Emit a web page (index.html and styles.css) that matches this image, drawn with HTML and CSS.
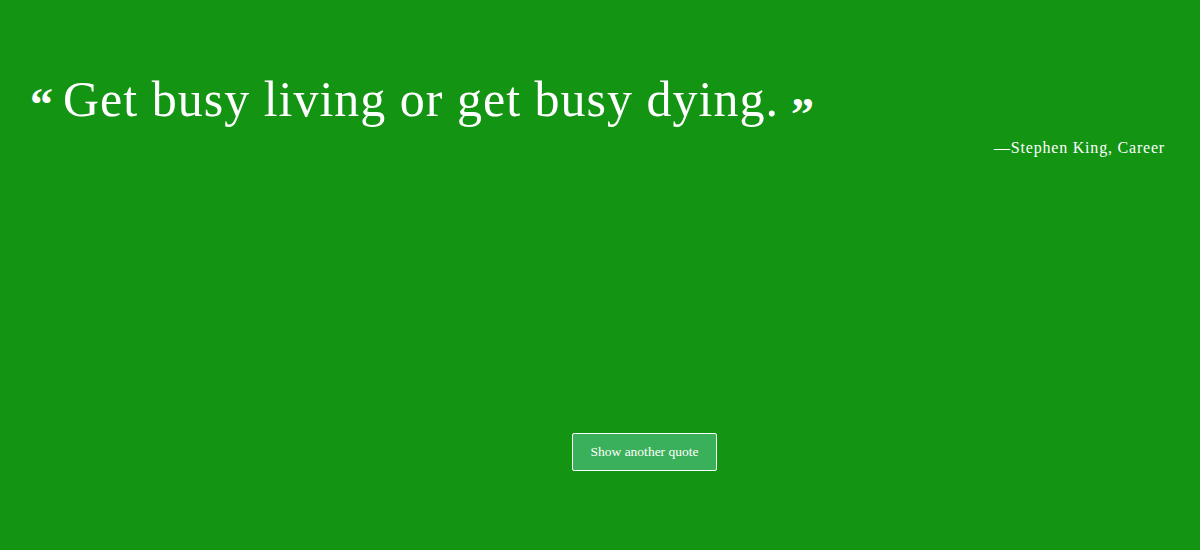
FILE: index.html
```html
<!DOCTYPE html>
<html>
<head>
<meta charset="utf-8">
<link rel="stylesheet" href="styles.css">
</head>
<body>
<main class="page">
  <blockquote class="quote">
    <p class="quote-text"><span class="mark mark-open">&ldquo;</span>Get busy living or get busy dying.<span class="mark mark-close">&rdquo;</span></p>
    <footer class="author">&mdash;Stephen King, Career</footer>
  </blockquote>
  <div class="actions">
    <button class="btn">Show another quote</button>
  </div>
</main>
</body>
</html>
```
FILE: styles.css
```css
html, body {
  margin: 0;
  padding: 0;
  height: 100%;
}
body {
  background: #139413;
  color: #ffffff;
  font-family: "Liberation Serif", "DejaVu Serif", serif;
}
.page {
  display: flex;
  flex-direction: column;
  height: 550px;
  padding: 0 35px 0 30px;
  box-sizing: border-box;
}
.quote {
  margin: 0;
  padding-top: 64px;
}
.quote-text {
  margin: 0;
  font-size: 50px;
  letter-spacing: 1px;
  line-height: 70px;
  display: flex;
  align-items: flex-start;
}
.mark {
  font-size: 46px;
  font-weight: bold;
  line-height: 1;
  letter-spacing: 0;
}
.mark-open {
  margin-right: 10px;
  margin-top: 18px;
}
.mark-close {
  margin-left: 12px;
  margin-top: 28px;
}
.author {
  text-align: right;
  font-size: 16px;
  letter-spacing: 0.8px;
  margin-top: 1px;
}
.actions {
  margin-top: auto;
  margin-bottom: 79px;
  display: flex;
  justify-content: center;
  padding-left: 94px;
}
.btn {
  background: #3bb05a;
  color: #ffffff;
  border: 1.5px solid #ffffff;
  border-radius: 2px;
  font-family: "Liberation Serif", "DejaVu Serif", serif;
  font-size: 13.5px;
  width: 145px;
  height: 38px;
  padding: 0;
}
```
